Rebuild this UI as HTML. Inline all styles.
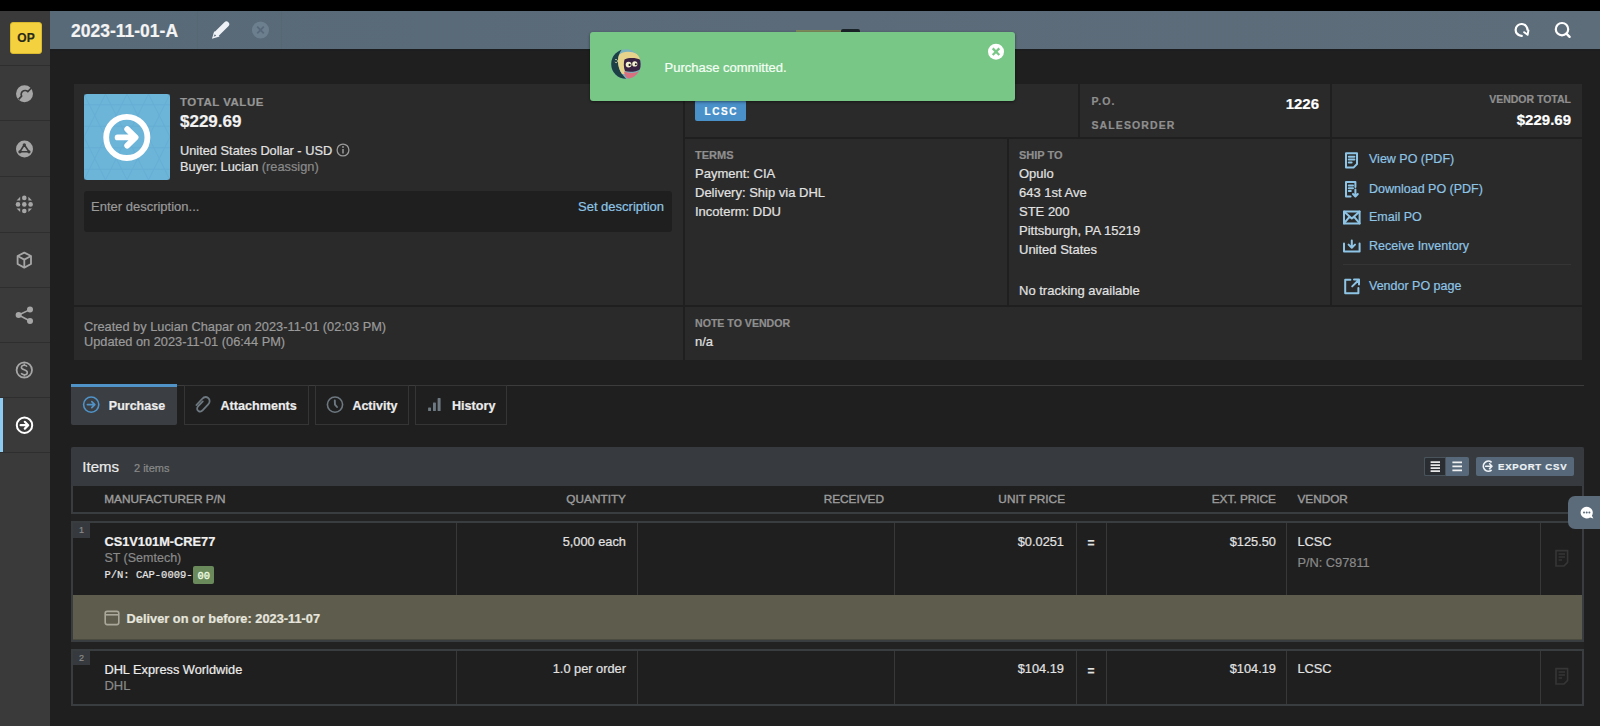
<!DOCTYPE html>
<html><head><meta charset="utf-8">
<style>
*{box-sizing:border-box;margin:0;padding:0}
html,body{width:1600px;height:726px;overflow:hidden;background:#1f1f1f;font-family:"Liberation Sans",sans-serif;color:#e2e2e2}
.a{position:absolute}
.t{position:absolute;white-space:nowrap;line-height:1;-webkit-text-stroke:0.2px currentColor}
.r{text-align:right}
.b{font-weight:bold}
.lbl{font-weight:bold;color:#8f8f8f}
.lnk{color:#8ec5e6}
.dim{color:#8a8a8a}
</style></head><body>
<!-- top black bar -->
<div class="a" style="left:0;top:0;width:1600px;height:11px;background:#000"></div>
<!-- sidebar -->
<div class="a" id="sidebar" style="left:0;top:11px;width:50px;height:715px;background:#3a3a3a"></div>
<div class="a" style="left:10px;top:22px;width:32px;height:32px;background:#f4d23f;border-radius:3px;border:1px solid #d9b92f"></div>
<div class="t b" style="left:10px;top:32px;width:32px;text-align:center;font-size:12px;color:#2a2a1a">OP</div>
<div class="a" style="left:0;top:65px;width:50px;height:1px;background:#2e2e2e"></div>
<div class="a" style="left:0;top:120px;width:50px;height:1px;background:#2e2e2e"></div>
<div class="a" style="left:0;top:176px;width:50px;height:1px;background:#2e2e2e"></div>
<div class="a" style="left:0;top:232px;width:50px;height:1px;background:#2e2e2e"></div>
<div class="a" style="left:0;top:287px;width:50px;height:1px;background:#2e2e2e"></div>
<div class="a" style="left:0;top:342px;width:50px;height:1px;background:#2e2e2e"></div>
<div class="a" style="left:0;top:397px;width:50px;height:1px;background:#2e2e2e"></div>
<div class="a" style="left:0;top:452px;width:50px;height:1px;background:#2e2e2e"></div>
<div class="a" style="left:0;top:398px;width:3px;height:54px;background:#8ecbf0"></div>
<svg class="a" style="left:0;top:66px" width="50" height="400" viewBox="0 66 50 400">
 <g fill="#a6a6a6">
  <circle cx="24.5" cy="93.8" r="8.5"/>
  <circle cx="24.5" cy="149" r="8.5"/>
 </g>
 <path d="M18.6 99.4 L21.6 96.2 C20.6 94.2 21.4 91.6 23.6 90.8 C25.4 90.2 27 90.8 27.8 91.6 L31.4 88" fill="none" stroke="#3a3a3a" stroke-width="1.7" stroke-linejoin="round"/>
 <path d="M24.3 144.8 L19.9 151.8 L29 151.8 Z" fill="none" stroke="#3a3a3a" stroke-width="1.6" stroke-linejoin="round"/>
 <circle cx="24.3" cy="144.8" r="1.6" fill="#3a3a3a"/><circle cx="19.9" cy="151.8" r="1.6" fill="#3a3a3a"/><circle cx="29" cy="151.8" r="1.6" fill="#3a3a3a"/>
 <g fill="#a6a6a6">
  <circle cx="24.3" cy="197.9" r="2.3"/><circle cx="24.3" cy="204.4" r="2.3"/><circle cx="24.3" cy="211" r="2.3"/>
  <circle cx="18" cy="204.4" r="2.3"/><circle cx="30.6" cy="204.4" r="2.3"/>
  <path d="M16.6 200.4 L20.2 196.8 L20.2 200.4Z"/><path d="M32 200.4 L28.4 196.8 L28.4 200.4Z"/>
  <path d="M16.6 208.4 L20.2 212 L20.2 208.4Z"/><path d="M32 208.4 L28.4 212 L28.4 208.4Z"/>
 </g>
 <g fill="none" stroke="#a6a6a6" stroke-width="1.8" stroke-linejoin="round">
  <path d="M24.3 252.6 L31 256 L31 264 L24.3 267.6 L17.6 264 L17.6 256 Z"/>
  <path d="M17.6 256 L24.3 259.6 L31 256 M24.3 259.6 L24.3 267.6"/>
 </g>
 <g fill="#a6a6a6">
  <circle cx="18.6" cy="315" r="3"/><circle cx="30" cy="309.6" r="3"/><circle cx="30" cy="321" r="3"/>
 </g>
 <path d="M18.6 315 L30 309.6 M18.6 315 L30 321" stroke="#a6a6a6" stroke-width="1.6"/>
 <circle cx="24.3" cy="370" r="7.7" fill="none" stroke="#a6a6a6" stroke-width="1.8"/>
 <path d="M27 366.6 C26.5 365.6 25.5 365.2 24.3 365.2 C22.5 365.2 21.4 366.2 21.4 367.4 C21.4 370.2 27.3 369.4 27.3 372.4 C27.3 373.8 26 374.8 24.3 374.8 C22.8 374.8 21.7 374.2 21.2 373.2 M24.3 363.4 L24.3 365.2 M24.3 374.8 L24.3 376.6" fill="none" stroke="#a6a6a6" stroke-width="1.6"/>
 <circle cx="24.5" cy="425.2" r="7.7" fill="none" stroke="#ffffff" stroke-width="2"/>
 <path d="M20.6 425.2 L28 425.2 M24.8 421.8 L28.2 425.2 L24.8 428.6" fill="none" stroke="#ffffff" stroke-width="2.2" stroke-linecap="round" stroke-linejoin="round"/>
</svg>
<!-- header -->
<div class="a" id="header" style="left:50px;top:11px;width:1550px;height:38px;background:linear-gradient(90deg,#586978,#5b6b79 50%,#5e6d7a)"></div>
<div class="t b" style="left:71px;top:22.5px;font-size:17.5px;color:#f4f4f4">2023-11-01-A</div>
<div class="a" style="left:197px;top:11px;width:1px;height:38px;background:#56666f;opacity:.6"></div>
<div class="a" style="left:281px;top:11px;width:1px;height:38px;background:#56666f;opacity:.6"></div>
<svg class="a" style="left:200px;top:11px" width="80" height="38" viewBox="200 11 80 38">
 <path d="M226.4 24.2 L216.8 33.8" stroke="#eef2f6" stroke-width="5.6" stroke-linecap="round"/>
 <path d="M214.2 31.2 L219.6 36.4 L212 38.8 Z" fill="#eef2f6"/>
 <path d="M213.6 36.8 L214.8 34.2 L216.2 35.8 Z" fill="#5a6a78"/>
 <circle cx="260.5" cy="30" r="8.6" fill="#6b7f8f"/>
 <path d="M257.2 26.7 L263.8 33.3 M263.8 26.7 L257.2 33.3" stroke="#58697a" stroke-width="1.8"/>
</svg>
<svg class="a" style="left:1500px;top:11px" width="100" height="38" viewBox="1500 11 100 38">
 <path d="M1527.4 30.6 A5.9 5.9 0 1 0 1521.6 35.8" fill="none" stroke="#fff" stroke-width="2.2"/>
 <circle cx="1518.2" cy="34.6" r="1.1" fill="#fff"/><circle cx="1521.8" cy="35.9" r="1.1" fill="#fff"/>
 <path d="M1524.2 32.2 L1527.6 34.8 L1528.4 30.4" fill="none" stroke="#fff" stroke-width="2" stroke-linejoin="round" stroke-linecap="round"/>
 <circle cx="1562" cy="29.2" r="6.2" fill="none" stroke="#fff" stroke-width="2.2"/>
 <path d="M1566.4 33.6 L1569.6 36.8" stroke="#fff" stroke-width="2.4" stroke-linecap="round"/>
</svg>

<div class="a" style="left:50px;top:49px;width:1550px;height:2px;background:#1b1d1f"></div>
<!-- CARD -->
<div class="a" style="left:74px;top:84px;width:609px;height:221px;background:#2a2a2a"></div>
<div class="a" style="left:685px;top:84px;width:393px;height:53px;background:#2a2a2a"></div>
<div class="a" style="left:1080px;top:84px;width:250px;height:53px;background:#2a2a2a"></div>
<div class="a" style="left:1332px;top:84px;width:250px;height:53px;background:#2a2a2a"></div>
<div class="a" style="left:685px;top:139px;width:322px;height:166px;background:#2a2a2a"></div>
<div class="a" style="left:1009px;top:139px;width:321px;height:166px;background:#2a2a2a"></div>
<div class="a" style="left:1332px;top:139px;width:250px;height:166px;background:#2a2a2a"></div>
<div class="a" style="left:74px;top:307px;width:609px;height:53px;background:#2a2a2a"></div>
<div class="a" style="left:685px;top:307px;width:897px;height:53px;background:#2a2a2a"></div>
<!-- A content -->
<div class="a" style="left:84px;top:94px;width:86px;height:86px;background:#6db4d9;border-radius:3px"></div>
<svg class="a" style="left:84px;top:94px" width="86" height="86" viewBox="0 0 86 86">
 <g stroke="#5aa3ca" stroke-width="1" opacity=".35" fill="none">
  <path d="M0 10.75 H86 M0 32.25 H86 M0 53.75 H86 M0 75.25 H86"/>
  <path d="M-21.5 86 L21.5 0 M0 86 L43 0 M21.5 86 L64.5 0 M43 86 L86 0 M64.5 86 L107.5 0"/>
  <path d="M-21.5 0 L21.5 86 M0 0 L43 86 M21.5 0 L64.5 86 M43 0 L86 86 M64.5 0 L107.5 86"/>
 </g>
 <circle cx="42.8" cy="43.4" r="20.6" fill="none" stroke="#fff" stroke-width="5.8"/>
 <path d="M33.6 43.4 L51.2 43.4 M43.2 35.2 L51.6 43.4 L43.2 51.6" fill="none" stroke="#fff" stroke-width="5.8" stroke-linecap="round" stroke-linejoin="round"/>
</svg>
<div class="t lbl" style="left:180px;top:97px;font-size:11.5px;letter-spacing:0.5px;color:#969696">TOTAL VALUE</div>
<div class="t b" style="left:180px;top:113px;font-size:17px;color:#f2f2f2">$229.69</div>
<div class="t" style="left:180px;top:145px;font-size:12.8px;color:#e2e2e2">United States Dollar - USD</div>
<svg class="a" style="left:335.5px;top:143.2px" width="14" height="14" viewBox="0 0 14 14"><circle cx="7" cy="7" r="5.9" fill="none" stroke="#9a9a9a" stroke-width="1.3"/><path d="M7 6 L7 10.4" stroke="#9a9a9a" stroke-width="1.5"/><circle cx="7" cy="4" r=".9" fill="#9a9a9a"/></svg>
<div class="t" style="left:180px;top:161.2px;font-size:12.8px;color:#e2e2e2">Buyer: Lucian <span style="color:#8a8a8a">(reassign)</span></div>
<div class="a" style="left:84px;top:191px;width:588px;height:41px;background:#1f1f1f;border-radius:3px"></div>
<div class="t" style="left:91px;top:199.5px;font-size:13px;color:#9a9a9a">Enter description...</div>
<div class="t lnk" style="left:500px;width:164px;text-align:right;top:199.5px;font-size:13px">Set description</div>
<!-- B -->
<div class="a" style="left:695px;top:100px;width:51px;height:21px;background:#4a90c9;border-radius:2px"></div>
<div class="t b" style="left:695px;width:51px;text-align:center;top:107px;font-size:10px;letter-spacing:1.6px;color:#fff;text-indent:1.6px">LCSC</div>
<!-- C -->
<div class="t lbl" style="left:1091.5px;top:96px;font-size:10.5px;letter-spacing:1.1px">P.O.</div>
<div class="t b" style="left:1200px;width:119px;text-align:right;top:96px;font-size:15px;color:#fff">1226</div>
<div class="t lbl" style="left:1091.5px;top:119.5px;font-size:10.5px;letter-spacing:1.1px">SALESORDER</div>
<!-- D -->
<div class="t lbl" style="left:1400px;width:171px;text-align:right;top:93.5px;font-size:10.5px">VENDOR TOTAL</div>
<div class="t b" style="left:1400px;width:171px;text-align:right;top:111.5px;font-size:15px;color:#fff">$229.69</div>
<!-- E -->
<div class="t lbl" style="left:695px;top:150px;font-size:11px">TERMS</div>
<div class="t" style="left:695px;top:163.5px;font-size:13px;line-height:19px">Payment: CIA<br>Delivery: Ship via DHL<br>Incoterm: DDU</div>
<!-- F -->
<div class="t lbl" style="left:1019px;top:149.5px;font-size:11px">SHIP TO</div>
<div class="t" style="left:1019px;top:163.5px;font-size:13px;line-height:19px">Opulo<br>643 1st Ave<br>STE 200<br>Pittsburgh, PA 15219<br>United States</div>
<div class="t" style="left:1019px;top:284px;font-size:13px">No tracking available</div>
<!-- G -->
<div class="t lnk" style="left:1369px;top:153.3px;font-size:12.5px">View PO (PDF)</div>
<div class="t lnk" style="left:1369px;top:182.5px;font-size:12.5px">Download PO (PDF)</div>
<div class="t lnk" style="left:1369px;top:211px;font-size:12.5px">Email PO</div>
<div class="t lnk" style="left:1369px;top:239.5px;font-size:12.5px">Receive Inventory</div>
<div class="a" style="left:1343px;top:264px;width:228px;height:1px;background:#353535"></div>
<div class="t lnk" style="left:1369px;top:279.5px;font-size:12.5px">Vendor PO page</div>
<svg class="a" style="left:1340px;top:149px" width="22" height="150" viewBox="1340 148 22 150">
 <g fill="none" stroke="#8ec5e6" stroke-width="2" stroke-linejoin="round" stroke-linecap="round">
  <path d="M1346 152.3 L1357 152.3 L1357 163 L1353.5 166.6 L1346 166.6 Z"/>
  <path d="M1348.8 155.8 L1354.4 155.8 M1348.8 158.6 L1354.4 158.6 M1348.8 161.4 L1351.6 161.4"/>
  <path d="M1355.4 186 L1355.4 181 L1346 181 L1346 195.4 L1350.6 195.4"/>
  <path d="M1348.8 184.4 L1353 184.4 M1348.8 187.2 L1353 187.2 M1348.8 190 L1350.8 190"/>
  <path d="M1355.4 188.6 L1355.4 195.4 M1353 193 L1355.4 195.6 L1357.8 193"/>
  <path d="M1344 210.6 L1359.6 210.6 L1359.6 222.4 L1344 222.4 Z"/>
  <path d="M1344 210.6 L1351.8 217.4 L1359.6 210.6 M1344 222.4 L1349.4 215.8 M1359.6 222.4 L1354.2 215.8"/>
  <path d="M1344 242.4 L1344 250.4 L1359.6 250.4 L1359.6 242.4"/>
  <path d="M1351.8 239.4 L1351.8 246.4 M1348.6 243.6 L1351.8 246.8 L1355 243.6"/>
  <path d="M1350.4 278.8 L1345.2 278.8 L1345.2 292.2 L1358.4 292.2 L1358.4 287"/>
  <path d="M1352.2 285.4 L1358.4 279.2 M1354 278.6 L1359 278.6 L1359 283.6"/>
 </g>
</svg>
<!-- H -->
<div class="t" style="left:84px;top:319px;font-size:12.8px;line-height:15px;color:#9a9a9a">Created by Lucian Chapar on 2023-11-01 (02:03 PM)<br>Updated on 2023-11-01 (06:44 PM)</div>
<!-- I -->
<div class="t lbl" style="left:695px;top:317.8px;font-size:10.6px">NOTE TO VENDOR</div>
<div class="t" style="left:695px;top:335px;font-size:13px">n/a</div>

<!-- TABS -->
<div class="a" style="left:71px;top:385px;width:1513px;height:1px;background:#3c3c3c"></div>
<div class="a" style="left:71px;top:384px;width:106px;height:41px;background:#3b3e42;border-radius:2px"></div>
<div class="a" style="left:71px;top:384px;width:106px;height:2.5px;background:#4f93c9"></div>
<div class="a" style="left:183.5px;top:385px;width:125.5px;height:40px;border:1px solid #353535;background:#1f1f1f"></div>
<div class="a" style="left:315px;top:385px;width:94px;height:40px;border:1px solid #353535;background:#1f1f1f"></div>
<div class="a" style="left:414.5px;top:385px;width:92.5px;height:40px;border:1px solid #353535;background:#1f1f1f"></div>
<svg class="a" style="left:71px;top:385px" width="440" height="40" viewBox="71 385 440 40">
 <circle cx="91.2" cy="404.6" r="7.6" fill="none" stroke="#4f93c9" stroke-width="1.6"/>
 <path d="M87.4 404.6 L94.6 404.6 M91.8 401.6 L94.8 404.6 L91.8 407.6" fill="none" stroke="#4f93c9" stroke-width="1.7" stroke-linecap="round" stroke-linejoin="round"/>
 <path transform="translate(-2.2,-0.6)" d="M205 402 L200.4 406.8 C198.8 408.6 199 410.6 200.6 411.6 C202 412.6 203.8 412.2 205 410.8 L210.4 405 C212.4 402.8 212.2 400 210.4 398.6 C208.6 397.2 206 397.6 204.2 399.6 L198.6 405.6" fill="none" stroke="#6d7880" stroke-width="1.8" stroke-linecap="round"/>
 <circle cx="335" cy="404.6" r="7.6" fill="none" stroke="#6d7880" stroke-width="1.6"/>
 <path d="M334.8 400.4 L335 404.6 L337 407" fill="none" stroke="#6d7880" stroke-width="1.9" stroke-linecap="round"/>
 <rect x="428.1" y="407.4" width="2.9" height="3.6" rx=".6" fill="#6d7880"/>
 <rect x="433" y="402.6" width="2.9" height="8.4" rx=".6" fill="#6d7880"/>
 <rect x="437.6" y="398.1" width="3" height="12.9" rx=".6" fill="#6d7880"/>
</svg>
<div class="t b" style="left:108.8px;top:400px;font-size:12.5px;color:#ececec">Purchase</div>
<div class="t b" style="left:220.5px;top:400px;font-size:12.6px;color:#ececec">Attachments</div>
<div class="t b" style="left:352.4px;top:400px;font-size:12.5px;color:#ececec">Activity</div>
<div class="t b" style="left:452px;top:400px;font-size:12.6px;color:#ececec">History</div>

<!-- ITEMS -->
<div class="a" style="left:71px;top:447px;width:1513px;height:259px;background:#222222"></div>
<div class="a" style="left:71px;top:447px;width:1513px;height:39px;background:#373b3f;border-radius:2px 2px 0 0"></div>
<div class="t" style="left:82.3px;top:459.3px;font-size:15px;color:#ececec">Items</div>
<div class="t" style="left:134px;top:463.2px;font-size:11px;color:#8a8a8a">2 items</div>
<div class="a" style="left:1424px;top:456.5px;width:45px;height:19.5px;background:#56687a;border-radius:2px"></div>
<div class="a" style="left:1424px;top:456.5px;width:22px;height:19.5px;background:#2a2e32;border:1px solid #48535c;border-radius:2px 0 0 2px"></div>
<svg class="a" style="left:1424px;top:456px" width="46" height="21" viewBox="1424 456 46 21">
 <path d="M1430.6 462.2 H1440 M1430.6 465.2 H1440 M1430.6 468.2 H1440 M1430.6 471.2 H1440" stroke="#e6e6e6" stroke-width="1.7"/>
 <path d="M1452.4 462.4 H1462 M1452.4 466.4 H1462 M1452.4 470.4 H1462" stroke="#f0f0f0" stroke-width="1.7"/>
</svg>
<div class="a" style="left:1475.5px;top:456.5px;width:98px;height:19.5px;background:#56687a;border-radius:2px"></div>
<svg class="a" style="left:1480px;top:459px" width="16" height="15" viewBox="0 0 16 15">
 <path d="M11.6 3.4 A5 5 0 1 0 11.6 11" fill="none" stroke="#eef2f5" stroke-width="1.7"/>
 <path d="M5.6 7.2 H12 M9.6 4.8 L12 7.2 L9.6 9.6" fill="none" stroke="#eef2f5" stroke-width="1.6" stroke-linecap="round" stroke-linejoin="round"/>
</svg>
<div class="t b" style="left:1498px;top:461.6px;font-size:9.6px;letter-spacing:0.75px;color:#eef2f5">EXPORT CSV</div>

<!-- table header -->
<div class="a" style="left:71px;top:486px;width:1513px;height:28px;background:#1f1f1f;border:2px solid #3a3d40;border-top:0"></div>
<div class="t" style="left:104.2px;top:493.8px;font-size:11.8px;color:#9c9c9c;-webkit-text-stroke:0.4px #9c9c9c">MANUFACTURER P/N</div>
<div class="t r" style="left:500px;width:126px;top:493.8px;font-size:11.8px;color:#9c9c9c;-webkit-text-stroke:0.4px #9c9c9c">QUANTITY</div>
<div class="t r" style="left:760px;width:124px;top:493.8px;font-size:11.8px;color:#9c9c9c;-webkit-text-stroke:0.4px #9c9c9c">RECEIVED</div>
<div class="t r" style="left:940px;width:125px;top:493.8px;font-size:11.8px;color:#9c9c9c;-webkit-text-stroke:0.4px #9c9c9c">UNIT PRICE</div>
<div class="t r" style="left:1150px;width:126px;top:493.8px;font-size:11.8px;color:#9c9c9c;-webkit-text-stroke:0.4px #9c9c9c">EXT. PRICE</div>
<div class="t" style="left:1297.4px;top:493.8px;font-size:11.8px;color:#9c9c9c;-webkit-text-stroke:0.4px #9c9c9c">VENDOR</div>

<!-- row 1 -->
<div class="a" style="left:71px;top:521px;width:1513px;height:121px;background:#1f1f1f;border:2px solid #3a3d40"></div>
<div class="a" style="left:456px;top:523px;width:1px;height:72px;background:#383838"></div>
<div class="a" style="left:637px;top:523px;width:1px;height:72px;background:#383838"></div>
<div class="a" style="left:893.5px;top:523px;width:1px;height:72px;background:#383838"></div>
<div class="a" style="left:1075.5px;top:523px;width:1px;height:72px;background:#383838"></div>
<div class="a" style="left:1106px;top:523px;width:1px;height:72px;background:#383838"></div>
<div class="a" style="left:1286px;top:523px;width:1px;height:72px;background:#383838"></div>
<div class="a" style="left:1540px;top:523px;width:1px;height:72px;background:#383838"></div>
<div class="a" style="left:73px;top:523px;width:17px;height:15px;background:#363a3e"></div>
<div class="t" style="left:73px;width:17px;text-align:center;top:526px;font-size:9px;color:#8a8a8a">1</div>
<div class="t b" style="left:104.4px;top:535.8px;font-size:12.8px;color:#f0f0f0">CS1V101M-CRE77</div>
<div class="t" style="left:104.4px;top:552px;font-size:12.5px;color:#8a8a8a">ST (Semtech)</div>
<div class="t" style="left:104.4px;top:570px;font-size:10.5px;font-family:'Liberation Mono',monospace;color:#e6e6e6;transform:scaleY(1.12);transform-origin:0 80%">P/N: CAP-0009-</div>
<div class="a" style="left:193px;top:565.6px;width:21.4px;height:18px;background:#6b8a5c;border-radius:2px"></div>
<div class="t" style="left:193px;width:21.4px;text-align:center;top:570.5px;font-size:10.5px;font-family:'Liberation Mono',monospace;color:#eafae0;transform:scaleY(1.12);transform-origin:0 80%;-webkit-text-stroke:0.35px #eafae0">00</div>
<div class="t r" style="left:500px;width:126px;top:536px;font-size:12.8px">5,000 each</div>
<div class="t r" style="left:940px;width:124px;top:536px;font-size:12.8px">$0.0251</div>
<div class="t" style="left:1076px;width:30px;text-align:center;top:537px;font-size:12px;font-weight:bold">=</div>
<div class="t r" style="left:1150px;width:126px;top:536px;font-size:12.8px">$125.50</div>
<div class="t" style="left:1297.4px;top:536px;font-size:12.8px">LCSC</div>
<div class="t" style="left:1297.4px;top:556.8px;font-size:12.8px;color:#8a8a8a">P/N: C97811</div>
<svg class="a" style="left:1554px;top:549px" width="16" height="19" viewBox="0 0 16 19">
 <path d="M2 1.6 H13.6 V13.4 L10 17 H2 Z M4.6 5 H11 M4.6 8 H11 M4.6 11 H8" fill="none" stroke="#363636" stroke-width="1.6"/>
</svg>
<!-- deliver -->
<div class="a" style="left:73px;top:595px;width:1509px;height:45px;background:#5e5d4d;border-bottom:1.5px solid #4c4b3f"></div>
<svg class="a" style="left:103px;top:609px" width="18" height="18" viewBox="0 0 18 18">
 <rect x="2.2" y="2.4" width="13.6" height="13.2" rx="2" fill="none" stroke="#a9a89a" stroke-width="1.6"/>
 <path d="M2.2 5.8 H15.8" stroke="#a9a89a" stroke-width="1.6"/>
</svg>
<div class="t b" style="left:126.6px;top:613.2px;font-size:12.8px;color:#e6e6de">Deliver on or before: 2023-11-07</div>

<!-- row 2 -->
<div class="a" style="left:71px;top:649px;width:1513px;height:57px;background:#1f1f1f;border:2px solid #3a3d40"></div>
<div class="a" style="left:456px;top:651px;width:1px;height:53px;background:#383838"></div>
<div class="a" style="left:637px;top:651px;width:1px;height:53px;background:#383838"></div>
<div class="a" style="left:893.5px;top:651px;width:1px;height:53px;background:#383838"></div>
<div class="a" style="left:1075.5px;top:651px;width:1px;height:53px;background:#383838"></div>
<div class="a" style="left:1106px;top:651px;width:1px;height:53px;background:#383838"></div>
<div class="a" style="left:1286px;top:651px;width:1px;height:53px;background:#383838"></div>
<div class="a" style="left:1540px;top:651px;width:1px;height:53px;background:#383838"></div>
<div class="a" style="left:73px;top:651px;width:17px;height:14px;background:#363a3e"></div>
<div class="t" style="left:73px;width:17px;text-align:center;top:654px;font-size:9px;color:#8a8a8a">2</div>
<div class="t" style="left:104.4px;top:664px;font-size:12.8px;color:#ececec">DHL Express Worldwide</div>
<div class="t" style="left:104.4px;top:679.2px;font-size:13px;color:#8a8a8a">DHL</div>
<div class="t r" style="left:500px;width:126px;top:663px;font-size:12.8px">1.0 per order</div>
<div class="t r" style="left:940px;width:124px;top:663px;font-size:12.8px">$104.19</div>
<div class="t" style="left:1076px;width:30px;text-align:center;top:665px;font-size:12px;font-weight:bold">=</div>
<div class="t r" style="left:1150px;width:126px;top:663px;font-size:12.8px">$104.19</div>
<div class="t" style="left:1297.4px;top:663px;font-size:12.8px">LCSC</div>
<svg class="a" style="left:1554px;top:667px" width="16" height="19" viewBox="0 0 16 19">
 <path d="M2 1.6 H13.6 V13.4 L10 17 H2 Z M4.6 5 H11 M4.6 8 H11 M4.6 11 H8" fill="none" stroke="#363636" stroke-width="1.6"/>
</svg>

<!-- chat widget -->
<div class="a" style="left:1568px;top:496px;width:40px;height:32.5px;background:#5b6b79;border-radius:7px"></div>
<svg class="a" style="left:1578px;top:504px" width="18" height="18" viewBox="0 0 18 18">
 <path d="M8.6 2.8 C12.2 2.8 14.8 5.4 14.8 8.6 C14.8 9.8 14.5 10.8 13.9 11.7 L15.4 14.4 L12.2 13.4 C11.2 14.1 10 14.4 8.6 14.4 C5.2 14.4 2.6 11.8 2.6 8.6 C2.6 5.4 5.2 2.8 8.6 2.8 Z" fill="#fff"/>
 <circle cx="6" cy="8.6" r="1" fill="#5b6b79"/><circle cx="8.7" cy="8.6" r="1" fill="#5b6b79"/><circle cx="11.4" cy="8.6" r="1" fill="#5b6b79"/>
</svg>

<!-- TOAST -->
<div class="a" style="left:796px;top:30px;width:45px;height:2px;background:#7d8a5a"></div>
<div class="a" style="left:841px;top:29px;width:19px;height:3px;background:#1a2428;border-radius:2px 2px 0 0"></div>
<div class="a" style="left:590px;top:32px;width:425px;height:69px;background:#78c787;border-radius:3px;box-shadow:0 1px 3px rgba(0,0,0,.45)"></div>
<svg class="a" style="left:606px;top:43px" width="40" height="40" viewBox="606 43 40 40">
 <defs><clipPath id="av"><circle cx="626" cy="64" r="14.8"/></clipPath></defs>
 <g clip-path="url(#av)">
  <rect x="606" y="43" width="40" height="40" fill="#79b3bd"/>
  <path d="M606 48 L623 48 C617 54 616 66 622 74 C624 77 627 79 629 83 L606 83 Z" fill="#1c4046"/>
  <path d="M619 55 C623 51 631 51 637 54 C640 56 641 59 640 61 L626 60 C624 64 624 70 626 74 L622 74 C618 68 617 60 619 55 Z" fill="#e6d48c"/>
  <path d="M624.5 59.5 C629 57.5 636 57.5 640.5 60 L641 69 C636 72 629 72.5 625 71 C623.5 67 623.5 63 624.5 59.5 Z" fill="#3a2242"/>
  <circle cx="628.6" cy="64.6" r="2.9" fill="#f2efcf"/><circle cx="634.8" cy="63.9" r="2.6" fill="#f2efcf"/>
  <circle cx="629.6" cy="64.9" r="1.1" fill="#1a1a1a"/><circle cx="635.8" cy="64.2" r="1" fill="#1a1a1a"/>
  <path d="M624 71.5 C629 73.5 635 73.5 639.5 71 C639.5 75 637 79 631 79.5 C627 79.5 624.5 76 624 71.5 Z" fill="#d9707f"/>
  <path d="M615.2 59.6 C616.6 59 617.8 60 617.4 61.6 C617 63 615.4 63 615 61.8" fill="none" stroke="#d8d8a8" stroke-width=".9"/>
 </g>
</svg>
<div class="t" style="left:664.5px;top:60.5px;font-size:13px;color:#f5fff5">Purchase committed.</div>
<svg class="a" style="left:986px;top:42px" width="20" height="20" viewBox="0 0 20 20">
 <circle cx="10" cy="9.7" r="8" fill="#fff"/>
 <path d="M6.7 6.4 L13.3 13 M13.3 6.4 L6.7 13" stroke="#78c787" stroke-width="2.3"/>
</svg>
</body></html>
